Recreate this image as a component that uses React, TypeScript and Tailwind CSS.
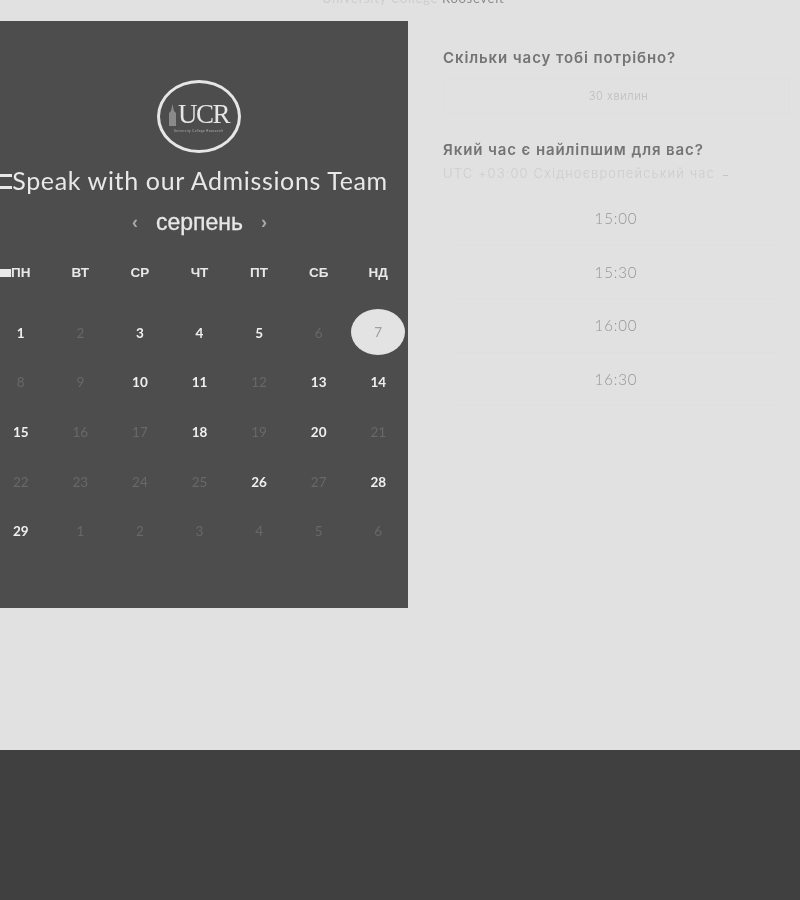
import React from "react";

const weekDays = ["ПН", "ВТ", "СР", "ЧТ", "ПТ", "СБ", "НД"];

// [label, available]
const days: [number, boolean][] = [
  [1, true], [2, false], [3, true], [4, true], [5, true], [6, false], [7, false],
  [8, false], [9, false], [10, true], [11, true], [12, false], [13, true], [14, true],
  [15, true], [16, false], [17, false], [18, true], [19, false], [20, true], [21, false],
  [22, false], [23, false], [24, false], [25, false], [26, true], [27, false], [28, true],
  [29, true], [1, false], [2, false], [3, false], [4, false], [5, false], [6, false],
];

const times = ["15:00", "15:30", "16:00", "16:30"];

function Logo() {
  return (
    <div className="-ml-[2px] flex h-[73px] w-[84px] flex-col items-center justify-center rounded-[50%] border-[3px] border-[#e6e6e6]">
      <div className="flex items-end gap-[1px]">
        <svg width="9" height="22" viewBox="0 0 9 22" className="mb-[3px]">
          <path d="M4.5 0 L6 7 L8 9 V22 H1 V9 L3 7 Z" fill="#8a8a8a" />
        </svg>
        <span className="font-['Liberation_Serif',serif] text-[27px] leading-[29px] tracking-[-1.5px] text-[#e6e6e6]">UCR</span>
      </div>
      <span className="font-['Liberation_Sans',sans-serif] text-[3px] leading-[4px] tracking-[0.4px] text-[#b5b5b5]">University College Roosevelt</span>
    </div>
  );
}

function CalendarPanel() {
  return (
    <section className="-ml-[9px] flex h-[587px] w-[417px] flex-col items-center bg-[#4d4d4d]">
      <div className="mt-[59px]">
        <Logo />
      </div>
      <h1 className="mt-[11px] flex h-[34px] items-center whitespace-nowrap pr-[11px] font-['Lato',sans-serif] text-[25px] tracking-[0.65px] text-[#e8e8e8]">
        <span className="flex h-[15px] w-[12px] flex-col justify-between">
          <span className="h-[3px] bg-[#e8e8e8]" />
          <span className="h-[3px] bg-[#e8e8e8]" />
        </span>
        Speak with our Admissions Team
      </h1>
      <div className="mt-[9px] flex h-[30px] items-center gap-[18px] font-['Liberation_Sans',sans-serif] text-[#e8e8e8]">
        <span className="text-[18px] font-bold text-[#a8a8a8]">‹</span>
        <span className="text-[23px] [-webkit-text-stroke:0.3px_#e8e8e8]">серпень</span>
        <span className="text-[18px] font-bold text-[#a8a8a8]">›</span>
      </div>
      <div className="mt-[28px] grid w-full grid-cols-7 font-['Liberation_Sans',sans-serif] text-[13.5px] font-bold text-[#e8e8e8]">
        {weekDays.map((d, i) => (
          <div key={d} className="relative flex h-[16px] items-center justify-center leading-none">
            {i === 0 && <span className="absolute left-[9px] top-[4px] h-[8px] w-[11px] bg-[#e8e8e8]" />}
            {d}
          </div>
        ))}
      </div>
      <div className="mt-[27px] grid w-full grid-cols-7 font-['Lato',sans-serif] text-[13.5px]">
        {days.map(([n, on], i) => (
          <div key={i} className="flex h-[49.7px] items-center justify-center">
            {i === 6 ? (
              <span className="-mt-[2px] flex h-[46px] w-[54px] items-center justify-center rounded-[50%] bg-[#e3e3e3] text-[#a0a0a0]">{n}</span>
            ) : (
              <span className={on ? "font-bold text-[#f0f0f0]" : "text-[#686868]"}>{n}</span>
            )}
          </div>
        ))}
      </div>
    </section>
  );
}

function BookingColumn() {
  return (
    <section className="flex w-[392px] flex-col pl-[35px]">
      <h2 className="mt-[27px] font-['Inter',sans-serif] text-[15px] leading-[20px] font-semibold tracking-[0.9px] text-[#747474]">
        Скільки часу тобі потрібно?
      </h2>
      <div className="mt-[10px] mr-[10px] flex h-[36px] items-center justify-center rounded-[4px] border border-[#dfdfdf] pl-[4px] font-['Inter',sans-serif] text-[11px] font-light tracking-[0.6px] text-[#bdbdbd]">
        30 хвилин
      </div>
      <h2 className="mt-[26px] font-['Inter',sans-serif] text-[15px] leading-[20px] font-semibold tracking-[0.9px] text-[#747474]">
        Який час є найліпшим для вас?
      </h2>
      <div className="mt-[5px] flex h-[18px] items-center gap-[8px] font-['Inter',sans-serif] text-[13px] font-light tracking-[1.1px] text-[#cdcdcd]">
        <span className="whitespace-nowrap">UTC +03:00 Східноєвропейський час</span>
        <span className="mt-[2px] h-[1px] w-[5px] bg-[#c4c4c4]" />
      </div>
      <ul className="mt-[9.5px] ml-[9px] mr-[20px] flex flex-col">
        {times.map((t) => (
          <li
            key={t}
            className="flex h-[53.4px] items-center justify-center border-b border-[#dfdfdf] font-['Lato',sans-serif] text-[15px] font-light tracking-[0.9px] text-[#959595]"
          >
            {t}
          </li>
        ))}
      </ul>
    </section>
  );
}

export default function App() {
  return (
    <div className="flex h-[900px] w-[800px] flex-col overflow-hidden bg-[#e1e1e1] blur-[0.5px]">
      <p className="-mt-[8px] h-[13px] pl-[322px] font-['Lato',sans-serif] text-[13px] leading-[13px] tracking-[0.7px] text-[#cdcdcd]">
        University College <span className="text-[#8c8c8c]">Roosevelt</span>
      </p>
      <main className="mt-[16px] flex h-[729px] items-start">
        <CalendarPanel />
        <BookingColumn />
      </main>
      <footer className="h-[150px] bg-[#404040]" />
    </div>
  );
}
